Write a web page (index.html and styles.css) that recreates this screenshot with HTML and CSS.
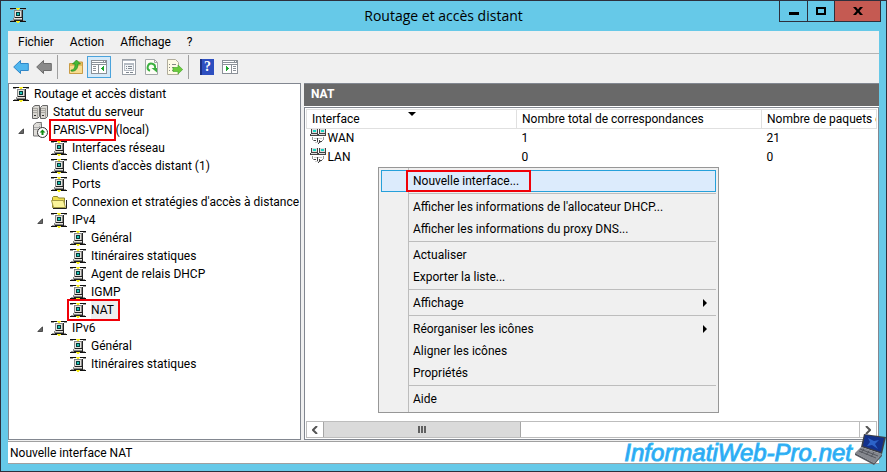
FILE: index.html
```html
<!DOCTYPE html>
<html lang="fr">
<head>
    <meta charset="UTF-8">
    <meta name="viewport" content="width=device-width, initial-scale=1.0">
    <title>Routage et accès distant</title>
    <link rel="stylesheet" href="styles.css">
</head>
<body>
    <svg class="sprite" aria-hidden="true">
        <symbol id="i-net" viewBox="0 0 16 16" shape-rendering="crispEdges">
            <path fill="#111" d="M0 1h16v1H0zM0 14h16v1H0z"/>
            <path fill="#999" d="M0 2h3v1H0zM13 2h3v1h-3zM1 13h3v1H1zM12 13h3v1h-3z"/>
            <path fill="#888" d="M4 3h8v8H4zM3 11h9v2H3z"/>
            <path fill="#222" d="M12 3h1v8h-1zM5 10h8v1H5zM12 11h1v2h-1zM4 13h9v1H4z"/>
            <path fill="#e4e2dc" d="M5 4h6v6H5zM4 11h8v1H4z"/>
            <path fill="#063a3a" d="M6 5h4v4H6z"/>
            <path fill="#1cc4b4" d="M7 6h2v2H7z"/>
            <path fill="#f7ee20" d="M6 1h4v1H6zM7 2h2v1H7zM6 14h4v1H6zM7 15h2v1H7z"/>
        </symbol>
        <symbol id="i-servers" viewBox="0 0 16 16">
            <path fill="#d9d7d2" stroke="#666" d="M.5 3.500 3 1.500h4.500v11l-2 2h-5zM8.500 3.500l2-2h5v11l-2 2h-5z"/>
            <path fill="none" stroke="#aaa8a2" d="M1 4.500h4M1 6.500h4M1 8.500h4M9 4.500h4M9 6.500h4M9 8.500h4M5.500 4v10M13.500 4v10"/>
            <path fill="#333" d="M2 11h2v1H2zM10 11h2v1h-2z"/>
        </symbol>
        <symbol id="i-server-up" viewBox="0 0 16 16">
            <path fill="#dedcd8" stroke="#777" d="M1.500 3l3-2.500h5V12l-2 2h-6z"/>
            <path fill="none" stroke="#aaa" d="M2 5.500h5M2 7.500h5M7.500 4v10M7.500 3l2-2"/>
            <circle cx="10.500" cy="10.500" r="5" fill="#fff" stroke="#333"/>
            <path fill="#138a13" d="M10.500 7.500l3 3h-2V13H9.500v-2.500h-2z"/>
        </symbol>
        <symbol id="i-folder" viewBox="0 0 16 16">
            <path fill="#f0e04a" stroke="#8d8430" d="M1.500 13.500v-10l1-1h4l1 1.500h6v9.500z"/>
            <path fill="#fbf49a" stroke="#a39a44" d="M.5 6.500h12l2 7H2.500z"/>
            <path fill="none" stroke="#222" d="M2 14.500h13.500V6"/>
        </symbol>
        <symbol id="i-link" viewBox="0 0 16 16" shape-rendering="crispEdges">
            <path fill="#444" d="M1 0h7v6H1zM9 0h7v6H9zM0 5h8v2H0zM8 5h8v2H8z"/>
            <path fill="#ddd" d="M2 0h5v4H2zM10 0h5v4h-5zM1 5h6v1H1zM9 5h6v1H9z"/>
            <path fill="#17d5c3" d="M3 1h3v2H3zM11 1h3v2h-3z"/>
            <path fill="#999" d="M2 8h1v3H2zM3 11h1v1H3zM13 8h1v3h-1zM12 11h1v1h-1z"/>
            <path fill="#ccc" d="M4 9h8v1H4zM5 13h6v1H5z"/>
            <path fill="#444" d="M4 11h2v1H4zM7 9h1v4H7zM9 11h1v3H9zM10 12h2v1h-2zM8 14h1v1H8z"/>
        </symbol>
        <symbol id="i-arrow" viewBox="0 0 16 16">
            <path d="M.7 8 7.500 1.500v3h7.800v7H7.500v3z"/>
        </symbol>
        <symbol id="i-up" viewBox="0 0 16 16">
            <path fill="#e8bd5c" stroke="#c99c45" d="M1.500 14.500v-10h5l1-1.500h7v11.500z"/>
            <path fill="#f8dc91" d="M2 7h12v7H2z"/>
            <path fill="#45b935" stroke="#238a1c" stroke-width=".7" d="M3 11c3 0 4-2 4-6H4.500L8.500 1l4 4H10c0 5-3 8-7 7z"/>
        </symbol>
        <symbol id="i-pane-left" viewBox="0 0 16 16" shape-rendering="crispEdges">
            <path fill="#8b9198" d="M0 1h16v14H0z"/>
            <path fill="#fff" d="M1 2h11v1H1zM13 2h1v1h-1zM1 4h14v1H1zM1 6h6v8H1zM8 6h7v8H8z"/>
            <path fill="#8b9198" d="M2 7h3v1H2zM2 9h3v1H2zM2 11h3v1H2z"/>
            <path fill="#1da62c" d="M12 7h1v5h-1zM11 8h1v3h-1zM10 9h1v1h-1z"/>
        </symbol>
        <symbol id="i-pane-right" viewBox="0 0 16 16" shape-rendering="crispEdges">
            <path fill="#8b9198" d="M0 1h16v14H0z"/>
            <path fill="#fff" d="M1 2h11v1H1zM13 2h1v1h-1zM1 4h14v1H1zM1 6h8v8H1zM10 6h5v8h-5z"/>
            <path fill="#8b9198" d="M11 7h3v1h-3zM11 9h3v1h-3zM11 11h3v1h-3z"/>
            <path fill="#1da62c" d="M4 7h1v5H4zM5 8h1v3H5zM6 9h1v1H6z"/>
        </symbol>
        <symbol id="i-props" viewBox="0 0 16 16" shape-rendering="crispEdges">
            <path fill="#9aa0a7" d="M1 0h14v16H1z"/>
            <path fill="#fff" d="M2 1h12v14H2z"/>
            <path fill="#b5bbc3" d="M2 1h12v1H2zM3 4h10v8H3z"/>
            <path fill="#f3f5f7" d="M4 6h8v5H4z"/>
            <path fill="#7f8790" d="M5 7h1v1H5zM7 7h4v1H7zM5 9h1v1H5zM7 9h4v1H7zM5 13h3v1H5zM9 13h3v1H9z"/>
        </symbol>
        <symbol id="i-refresh" viewBox="0 0 16 16">
            <path fill="#fdfdf6" stroke="#a4a8aa" d="M1.500.5h9l3 3v12h-12z"/>
            <path fill="none" stroke="#a4a8aa" d="M10.500.5v3h3"/>
            <path fill="none" stroke="#3bb040" stroke-width="2" d="M6 11.800A3.700 3.700 0 1 1 11 9"/>
            <path fill="#3bb040" d="M7.500 9H13v4.500z"/>
        </symbol>
        <symbol id="i-export" viewBox="0 0 16 16">
            <path fill="#fffbe6" stroke="#b0ad9c" d="M.5.5h8l3 3v12H.500z"/>
            <path fill="none" stroke="#888" d="M2 5.500h1M5 5.500h4M2 8.500h1M5 8.500h2M2 11.500h1M5 11.500h2"/>
            <path fill="#6ccb3c" stroke="#4cac32" stroke-width=".7" d="M6 8.500h5V6l4.700 4.500L11 15v-2.500H6z"/>
        </symbol>
        <symbol id="i-submenu" viewBox="0 0 4 8"><path d="M0 0v8l4-4z"/></symbol>
        <symbol id="i-open" viewBox="0 0 6 6"><path fill="#666" stroke="#333" stroke-width=".8" d="M5.500.8v4.700H.8z"/></symbol>
    </svg>

    <div class="window">
        <header class="titlebar">
            <svg class="icon app-icon"><use href="#i-net"/></svg>
            <h1>Routage et accès distant</h1>
            <div class="window-buttons">
                <button type="button" class="minimize" aria-label="Réduire"><svg width="10" height="10"><path d="M0 6h10v3H0z"/></svg></button>
                <button type="button" class="maximize" aria-label="Agrandir"><svg width="10" height="8"><path fill="none" stroke="#000" stroke-width="2" d="M1 1h8v6H1z"/></svg></button>
                <button type="button" class="close" aria-label="Fermer"><svg width="10" height="8"><path d="M0 0h3l2 2.500L7 0h3L6.500 4 10 8H7L5 5.500 3 8H0l3.500-4z"/></svg></button>
            </div>
        </header>

        <div class="client">
            <nav class="menubar">
                <button type="button">Fichier</button>
                <button type="button">Action</button>
                <button type="button">Affichage</button>
                <button type="button">?</button>
            </nav>

            <div class="toolbar">
                <button type="button" class="back" aria-label="Précédent"><svg class="icon"><use href="#i-arrow"/></svg></button>
                <button type="button" class="forward" aria-label="Suivant"><svg class="icon"><use href="#i-arrow"/></svg></button>
                <span class="divider"></span>
                <button type="button" aria-label="Dossier parent"><svg class="icon"><use href="#i-up"/></svg></button>
                <button type="button" class="pressed" aria-label="Arborescence"><svg class="icon"><use href="#i-pane-left"/></svg></button>
                <button type="button" aria-label="Propriétés"><svg class="icon"><use href="#i-props"/></svg></button>
                <button type="button" aria-label="Actualiser"><svg class="icon"><use href="#i-refresh"/></svg></button>
                <button type="button" aria-label="Exporter"><svg class="icon"><use href="#i-export"/></svg></button>
                <span class="divider"></span>
                <button type="button" class="help" aria-label="Aide"><span>?</span></button>
                <button type="button" aria-label="Volet Actions"><svg class="icon"><use href="#i-pane-right"/></svg></button>
            </div>

            <main class="panes">
                <div class="tree">
                    <a href="#"><svg class="icon"><use href="#i-net"/></svg>Routage et accès distant</a>
                    <ul>
                        <li><a href="#"><svg class="icon"><use href="#i-servers"/></svg>Statut du serveur</a></li>
                        <li class="open">
                            <svg class="toggle"><use href="#i-open"/></svg>
                            <a href="#"><svg class="icon"><use href="#i-server-up"/></svg><span><span class="mark mark-server">PARIS-VPN</span> (local)</span></a>
                            <ul>
                                <li><a href="#"><svg class="icon"><use href="#i-net"/></svg>Interfaces réseau</a></li>
                                <li><a href="#"><svg class="icon"><use href="#i-net"/></svg>Clients d'accès distant (1)</a></li>
                                <li><a href="#"><svg class="icon"><use href="#i-net"/></svg>Ports</a></li>
                                <li><a href="#"><svg class="icon"><use href="#i-folder"/></svg>Connexion et stratégies d'accès à distance</a></li>
                                <li class="open">
                                    <svg class="toggle"><use href="#i-open"/></svg>
                                    <a href="#"><svg class="icon"><use href="#i-net"/></svg>IPv4</a>
                                    <ul>
                                        <li><a href="#"><svg class="icon"><use href="#i-net"/></svg>Général</a></li>
                                        <li><a href="#"><svg class="icon"><use href="#i-net"/></svg>Itinéraires statiques</a></li>
                                        <li><a href="#"><svg class="icon"><use href="#i-net"/></svg>Agent de relais DHCP</a></li>
                                        <li><a href="#"><svg class="icon"><use href="#i-net"/></svg>IGMP</a></li>
                                        <li><a href="#" class="mark mark-node"><svg class="icon"><use href="#i-net"/></svg><span class="selected">NAT</span></a></li>
                                    </ul>
                                </li>
                                <li class="open">
                                    <svg class="toggle"><use href="#i-open"/></svg>
                                    <a href="#"><svg class="icon"><use href="#i-net"/></svg>IPv6</a>
                                    <ul>
                                        <li><a href="#"><svg class="icon"><use href="#i-net"/></svg>Général</a></li>
                                        <li><a href="#"><svg class="icon"><use href="#i-net"/></svg>Itinéraires statiques</a></li>
                                    </ul>
                                </li>
                            </ul>
                        </li>
                    </ul>
                </div>

                <section class="details">
                    <h2>NAT</h2>
                    <div class="list">
                        <table>
                            <colgroup>
                                <col class="col-name">
                                <col class="col-mappings">
                                <col>
                            </colgroup>
                            <thead>
                                <tr>
                                    <th class="sorted">Interface</th>
                                    <th>Nombre total de correspondances</th>
                                    <th>Nombre de paquets entrants traduits</th>
                                </tr>
                            </thead>
                            <tbody>
                                <tr>
                                    <td><div class="name"><svg class="icon"><use href="#i-link"/></svg>WAN</div></td>
                                    <td>1</td>
                                    <td>21</td>
                                </tr>
                                <tr>
                                    <td><div class="name"><svg class="icon"><use href="#i-link"/></svg>LAN</div></td>
                                    <td>0</td>
                                    <td>0</td>
                                </tr>
                            </tbody>
                        </table>
                        <div class="scrollbar">
                            <button type="button" aria-label="Défiler à gauche"><svg width="6" height="8"><path d="M5 0 1 4l4 4"/></svg></button>
                            <div class="track"><div class="thumb"><i></i><i></i><i></i></div></div>
                            <button type="button" aria-label="Défiler à droite"><svg width="6" height="8"><path d="M1 0l4 4-4 4"/></svg></button>
                        </div>
                    </div>
                </section>
            </main>

            <footer class="statusbar">Nouvelle interface NAT</footer>
        </div>

        <div class="context-menu">
            <button type="button" class="active"><span class="mark mark-item">Nouvelle interface...</span></button>
            <hr>
            <button type="button">Afficher les informations de l'allocateur DHCP...</button>
            <button type="button">Afficher les informations du proxy DNS...</button>
            <hr>
            <button type="button">Actualiser</button>
            <button type="button">Exporter la liste...</button>
            <hr>
            <button type="button">Affichage<svg class="submenu"><use href="#i-submenu"/></svg></button>
            <hr>
            <button type="button">Réorganiser les icônes<svg class="submenu"><use href="#i-submenu"/></svg></button>
            <button type="button">Aligner les icônes</button>
            <button type="button">Propriétés</button>
            <hr>
            <button type="button">Aide</button>
        </div>

        <div class="watermark">
            <span>InformatiWeb-Pro.net</span>
            <svg width="32" height="31" viewBox="0 0 32 31">
                <path fill="#3c3f46" d="M9 0l22 3-4 17L6 13z"/>
                <path fill="#12318c" d="M10 1l19 3-3 14L8 12z"/>
                <path fill="#2c63c8" d="M13 4l6 3 5-1-4 4 3 5-6-4-5 1 3-4z"/>
                <path fill="#85888f" d="M6 13l21 7-8 9L0 19z"/>
                <path fill="none" stroke="#55585f" d="M5 15l18 7M4 17l17 7M9 15l-3 4M14 17l-3 4M19 18l-3 5"/>
                <path fill="#55585f" d="M0 19l19 10 8-9v2l-8 9L0 21z"/>
            </svg>
        </div>
    </div>
</body>
</html>
```
FILE: styles.css
```css
* {
    margin: 0;
    padding: 0;
    box-sizing: border-box;
}

body {
    font-family: "Segoe UI", Roboto, sans-serif;
    font-size: 12px;
    line-height: 18px;
    color: #000;
}

button {
    font: inherit;
    color: inherit;
    background: none;
    border: none;
}

a {
    color: inherit;
    text-decoration: none;
}

ul {
    list-style: none;
}

.sprite {
    position: absolute;
    width: 0;
    height: 0;
}

.icon {
    display: block;
    flex: none;
    width: 16px;
    height: 16px;
}

.window {
    position: relative;
    display: flex;
    flex-direction: column;
    min-height: 100vh;
    padding: 0 7px 7px;
    background: #66c9e8;
    border: 1px solid #2d2f3c;
    overflow: hidden;
}

/* Title bar */
.titlebar {
    display: grid;
    grid-template-columns: 1fr auto 1fr;
    height: 30px;
}

.app-icon {
    margin: 6px 0 0 2px;
}

.titlebar h1 {
    font-family: "Segoe UI", "Open Sans", sans-serif;
    font-size: 14px;
    font-weight: normal;
    line-height: 30px;
}

.window-buttons {
    display: flex;
    justify-self: end;
    height: 21px;
    margin-right: -2px;
    border: 1px solid #2d2f3c;
    border-top: none;
}

.window-buttons button {
    display: flex;
    align-items: center;
    justify-content: center;
    width: 27px;
}

.window-buttons button + button {
    border-left: 1px solid #2d2f3c;
}

.window-buttons .close {
    width: 46px;
    background: #c55a52;
}

/* Menu bar and toolbar */
.client {
    flex: 1;
    display: flex;
    flex-direction: column;
    background: #f0f0f0;
}

.menubar {
    display: flex;
    gap: 16px;
    height: 23px;
    padding: 0 10px;
    border-bottom: 1px solid #b4b4b4;
}

.toolbar {
    display: flex;
    align-items: center;
    height: 29px;
    padding: 0 1px 4px;
}

.toolbar button {
    display: flex;
    align-items: center;
    justify-content: center;
    width: 23px;
    height: 22px;
}

.toolbar .pressed {
    width: 24px;
    margin-right: 6px;
    background: #d5e9f8;
    border: 1px solid #4aa3dc;
}

.toolbar .divider {
    align-self: stretch;
    width: 1px;
    margin: 1px 6px 0 2px;
    background: #a0a0a0;
}

.back {
    fill: #4fb6ee;
    stroke: #2f87c8;
}

.forward {
    fill: #8a8a8a;
    stroke: #6c6c6c;
}

.help span {
    width: 14px;
    height: 16px;
    background: #2e4fc0;
    border-left: 2px solid #1c3186;
    color: #fff;
    font: bold 14px/16px "Liberation Serif", serif;
}

/* Panes */
.panes {
    flex: 1;
    display: flex;
    gap: 3px;
}

.tree {
    width: 293px;
    padding: 1px 4px;
    background: #fff;
    border: 1px solid #828790;
    white-space: nowrap;
}

.tree a {
    display: flex;
    gap: 5px;
    align-items: center;
    width: max-content;
    height: 18px;
}

.tree ul {
    padding-left: 19px;
}

.open {
    position: relative;
}

.toggle {
    position: absolute;
    left: -14px;
    top: 7px;
    width: 6px;
    height: 6px;
}

.mark {
    outline: 2px solid #f00008;
}

.mark-server {
    outline-offset: 2px;
}

.tree .mark-node {
    margin-left: -1px;
    padding-left: 1px;
}

.selected {
    padding-right: 4px;
    background: #eee;
}

.details {
    flex: 1;
    display: flex;
    flex-direction: column;
    min-width: 0;
    background: #fff;
}

.details h2 {
    height: 23px;
    margin-bottom: 1px;
    padding-left: 7px;
    background: #696969;
    border-top: 1px solid #828790;
    color: #fff;
    font-size: 12px;
    line-height: 21px;
}

.list {
    flex: 1;
    display: flex;
    flex-direction: column;
    justify-content: space-between;
    padding: 1px;
    border: 1px solid #828790;
}

table {
    width: 100%;
    table-layout: fixed;
    border-collapse: collapse;
}

.col-name {
    width: 210px;
}

.col-mappings {
    width: 245px;
}

th,
td {
    padding: 0 0 0 5px;
    overflow: hidden;
    text-align: left;
    font-weight: normal;
    white-space: nowrap;
}

th {
    height: 19px;
    border: 1px solid #e0e0e0;
}

td {
    height: 19px;
}

.sorted {
    position: relative;
}

.sorted::after {
    content: "";
    position: absolute;
    top: 2px;
    left: 50%;
    border: 4px solid transparent;
    border-top-color: #000;
    border-bottom: none;
    margin-left: -4px;
}

.name {
    display: flex;
    gap: 2px;
    margin-left: -2px;
}

.scrollbar {
    display: flex;
    height: 17px;
    border: 1px solid #bdbdbd;
}

.scrollbar button {
    display: flex;
    align-items: center;
    justify-content: center;
    width: 16px;
}

.scrollbar path {
    fill: none;
    stroke: #555;
    stroke-width: 2;
}

.track {
    flex: 1;
    border-right: 1px solid #bdbdbd;
}

.thumb {
    display: flex;
    gap: 1px;
    align-items: center;
    justify-content: center;
    width: 37%;
    height: 15px;
    background: #dadada;
    border: solid #a6a6a6;
    border-width: 0 1px;
}

.thumb i {
    width: 2px;
    height: 7px;
    background: #606060;
}

.statusbar {
    height: 23px;
    margin-top: 1px;
    padding: 2px;
    background: #fff;
    border-top: 1px solid #a0a0a0;
    border-bottom: 1px solid #a0a0a0;
}

/* Context menu */
.context-menu {
    position: absolute;
    top: 166px;
    left: 377px;
    width: 341px;
    padding: 2px;
    background: linear-gradient(#bdbdbd, #bdbdbd) 29px 0 / 1px 100% no-repeat #f0f0f0;
    border: 1px solid #979797;
}

.context-menu button {
    display: flex;
    align-items: center;
    width: 100%;
    height: 22px;
    padding: 0 9px 0 32px;
    text-align: left;
    white-space: nowrap;
}

.context-menu .active {
    background: #dcebfc;
    border: 1px solid #26a0da;
    padding-left: 31px;
}

.context-menu hr {
    height: 1px;
    margin: 1px 0 2px 27px;
    border: none;
    background: #bdbdbd;
}

.mark-item {
    margin-left: -5px;
    padding: 0 10px 0 5px;
}

.submenu {
    width: 4px;
    height: 8px;
    margin-left: auto;
}

.watermark {
    position: absolute;
    right: -1px;
    bottom: -1px;
    display: flex;
    gap: 3px;
    color: #2b9df4;
    font: italic 24px/38px "Liberation Sans", Arial, sans-serif;
    -webkit-text-stroke: 1px #34b8f4;
}
```
